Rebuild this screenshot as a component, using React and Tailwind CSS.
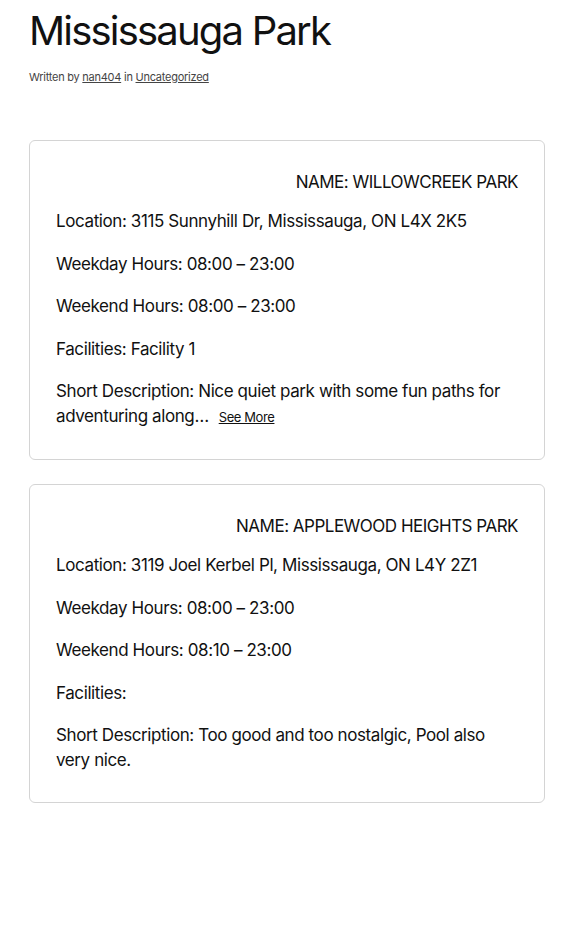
const parks = [
  {
    name: "WILLOWCREEK PARK",
    location: "3115 Sunnyhill Dr, Mississauga, ON L4X 2K5",
    weekday: "08:00 – 23:00",
    weekend: "08:00 – 23:00",
    facilities: "Facility 1",
    description: "Nice quiet park with some fun paths for adventuring along…",
    more: true,
  },
  {
    name: "APPLEWOOD HEIGHTS PARK",
    location: "3119 Joel Kerbel Pl, Mississauga, ON L4Y 2Z1",
    weekday: "08:00 – 23:00",
    weekend: "08:10 – 23:00",
    facilities: "",
    description: "Too good and too nostalgic, Pool also very nice.",
    more: false,
  },
];

function ParkCard({ park }) {
  return (
    <div className="rounded-md border border-[#d4d4d4] px-[26px] pt-[29px] pb-[29px]">
      <p className="text-right text-[17px] leading-[24px] tracking-[-0.5px]">NAME: {park.name}</p>
      <div className="mt-[15px] pr-[6px] flex flex-col gap-[17.5px] text-[17px] leading-[25px] tracking-[-0.4px]">
        <p>Location: {park.location}</p>
        <p>Weekday Hours: {park.weekday}</p>
        <p>Weekend Hours: {park.weekend}</p>
        <p>Facilities: {park.facilities}</p>
        <p>
          Short Description: {park.description}
          {park.more && (
            <a href="#" className="ml-[10px] text-[13px] underline tracking-[-0.4px]">
              See More
            </a>
          )}
        </p>
      </div>
    </div>
  );
}

export default function App() {
  return (
    <div className="min-h-[934px] bg-white px-[29px] text-[#111] font-['Inter',sans-serif]">
      <h1 className="pt-[8px] text-[40px] leading-[46px] tracking-[-1.8px]">Mississauga Park</h1>
      <p className="mt-[15px] text-[11px] leading-[16px] tracking-[-0.25px] text-[#444]">
        Written by <a href="#" className="underline">nan404</a> in{" "}
        <a href="#" className="underline">Uncategorized</a>
      </p>
      <div className="mt-[55px] flex flex-col gap-[24px] w-[516px]">
        {parks.map((p) => (
          <ParkCard key={p.name} park={p} />
        ))}
      </div>
    </div>
  );
}
